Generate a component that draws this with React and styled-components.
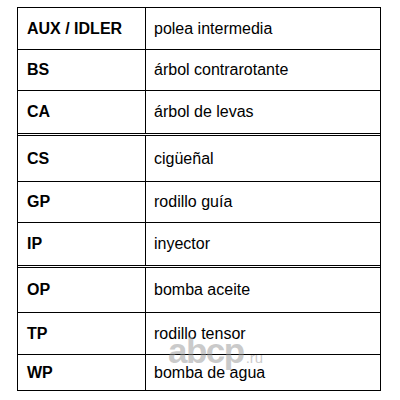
import React from 'react';
import styled, { createGlobalStyle } from 'styled-components';

const GlobalStyle = createGlobalStyle`
  html, body {
    margin: 0;
    padding: 0;
    background: #ffffff;
  }
  body {
    font-family: 'Liberation Sans', Arial, sans-serif;
    color: #000;
  }
`;

const Page = styled.div`
  position: relative;
  width: 400px;
  height: 400px;
  padding: 7px 0 0 17px;
  box-sizing: border-box;
`;

const Table = styled.div`
  width: 364px;
  border: 1px solid #000;
  box-sizing: border-box;
  display: flex;
  flex-direction: column;
`;

const Group = styled.div`
  display: flex;
  flex-direction: column;
  & + & {
    border-top: 3px double #000;
  }
`;

const Row = styled.div`
  display: flex;
  align-items: stretch;
  & + & {
    border-top: 1px solid #000;
  }
`;

const KeyCell = styled.div`
  width: 128px;
  flex: none;
  border-right: 1px solid #000;
  display: flex;
  align-items: center;
  padding-left: 9px;
  box-sizing: border-box;
  font-size: 16px;
  font-weight: bold;
`;

const ValueCell = styled.div`
  flex: 1;
  display: flex;
  align-items: center;
  padding-left: 8px;
  font-size: 16px;
`;

const Watermark = styled.div`
  position: absolute;
  left: 168px;
  top: 333px;
  display: flex;
  align-items: baseline;
  color: rgba(150, 150, 150, 0.5);
  pointer-events: none;
  font-family: 'Liberation Sans', Arial, sans-serif;
  font-weight: bold;
  line-height: 1;
`;

const MarkBig = styled.span`
  font-size: 35px;
  letter-spacing: -1.5px;
`;

const MarkSmall = styled.span`
  font-size: 15px;
  font-weight: normal;
  margin-left: 2px;
`;

const groups = [
  [
    { key: 'AUX / IDLER', value: 'polea intermedia', h: 41 },
    { key: 'BS', value: 'árbol contrarotante', h: 40 },
    { key: 'CA', value: 'árbol de levas', h: 42 },
  ],
  [
    { key: 'CS', value: 'cigüeñal', h: 45 },
    { key: 'GP', value: 'rodillo guía', h: 40 },
    { key: 'IP', value: 'inyector', h: 42 },
  ],
  [
    { key: 'OP', value: 'bomba aceite', h: 44 },
    { key: 'TP', value: 'rodillo tensor', h: 41 },
    { key: 'WP', value: 'bomba de agua', h: 35 },
  ],
];

const App = () => {
  return (
    <Page>
      <GlobalStyle />
      <Table>
        {groups.map((rows, gi) => (
          <Group key={`g${gi}`}>
            {rows.map((row) => (
              <Row key={row.key} style={{ height: row.h }}>
                <KeyCell>{row.key}</KeyCell>
                <ValueCell>{row.value}</ValueCell>
              </Row>
            ))}
          </Group>
        ))}
      </Table>
      <Watermark>
        <MarkBig>abcp</MarkBig>
        <MarkSmall>.ru</MarkSmall>
      </Watermark>
    </Page>
  );
};

export default App;
